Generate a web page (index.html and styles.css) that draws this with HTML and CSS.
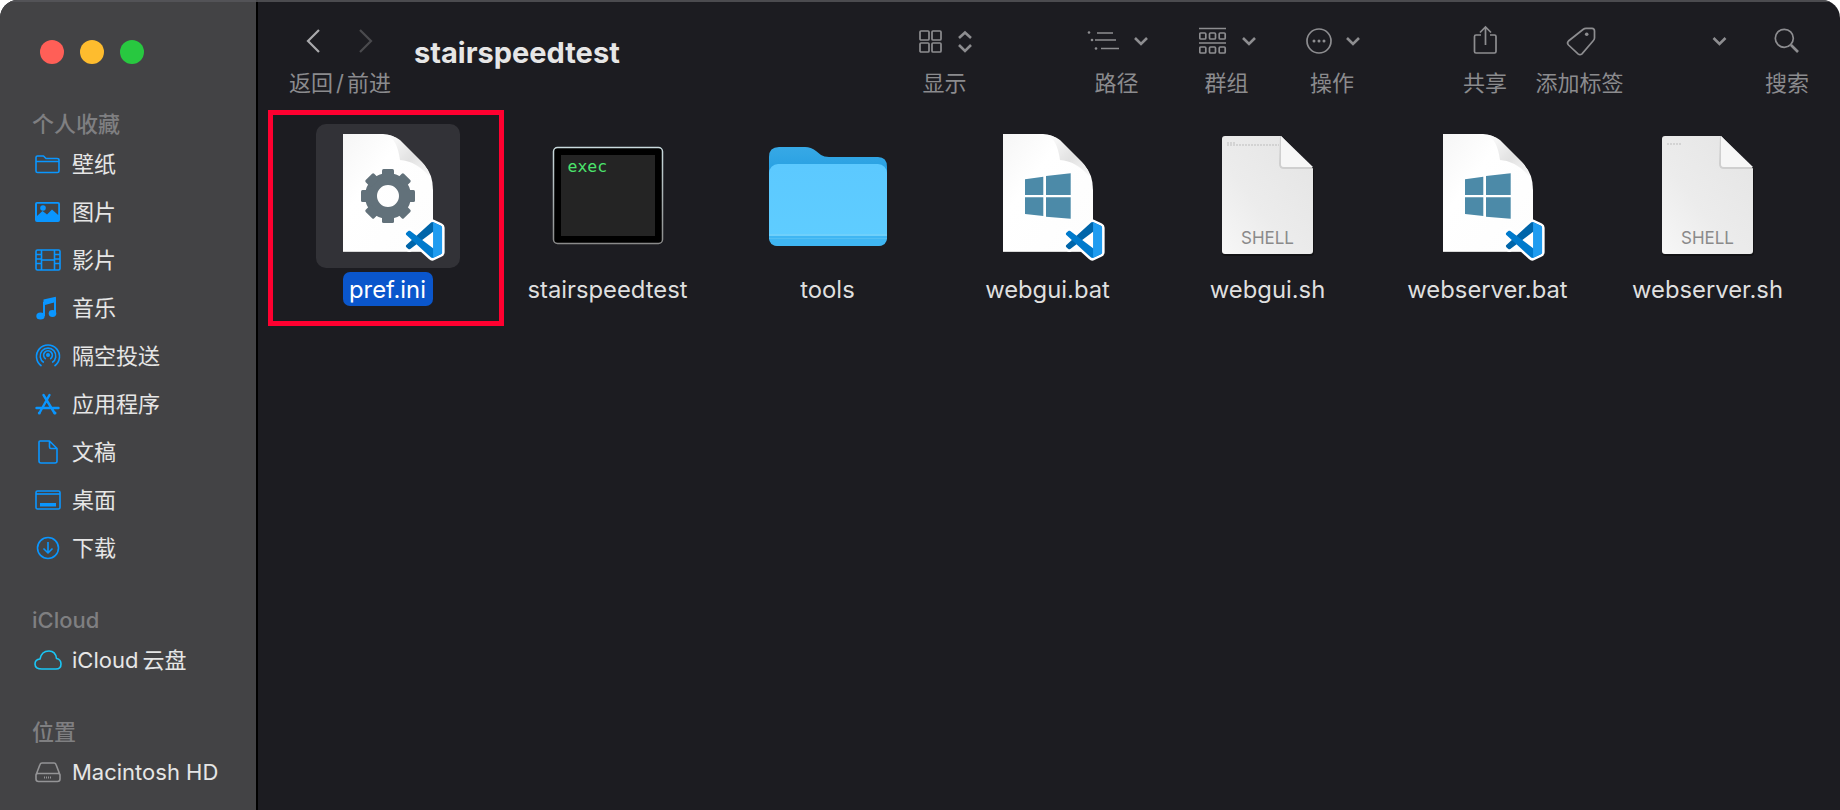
FILE: index.html
```html
<!DOCTYPE html>
<html lang="zh-CN">
<head>
<meta charset="utf-8">
<title>stairspeedtest</title>
<link rel="stylesheet" href="styles.css">
</head>
<body>
<svg class="defs" aria-hidden="true">
  <defs>
    <linearGradient id="pageGrad" x1="0" y1="0" x2="1" y2="1"><stop offset="0" stop-color="#f6f6f6"/><stop offset=".35" stop-color="#ffffff"/><stop offset="1" stop-color="#fdfdfd"/></linearGradient>
    <linearGradient id="foldShadow" x1="0" y1="0" x2="1" y2="1"><stop offset="0" stop-color="#ffffff"/><stop offset=".55" stop-color="#e2e2e2"/><stop offset="1" stop-color="#f8f8f8"/></linearGradient>
    <linearGradient id="shellGrad" x1="1" y1="0" x2="0" y2="1"><stop offset="0" stop-color="#e4e4e4"/><stop offset=".6" stop-color="#ececec"/><stop offset="1" stop-color="#f7f7f7"/></linearGradient>
    <linearGradient id="execRim" x1="0" y1="0" x2="0" y2="1"><stop offset="0" stop-color="#c9dade"/><stop offset="1" stop-color="#8a8a8a"/></linearGradient>
    <linearGradient id="folderBack" x1="0" y1="0" x2="0" y2="1"><stop offset="0" stop-color="#37a9e6"/><stop offset="1" stop-color="#1f9be0"/></linearGradient>
    <linearGradient id="folderFront" x1="0" y1="0" x2="0" y2="1"><stop offset="0" stop-color="#5cc9ff"/><stop offset="1" stop-color="#5fcdff"/></linearGradient>
    <symbol id="vsc" viewBox="-8 -8 116 116">
      <path fill="#fff" stroke="#fff" stroke-width="14" stroke-linejoin="round" d="M75.9 99.1 96.5 89.2C98.6 88.2 100 86 100 83.6V16.4C100 14 98.6 11.8 96.5 10.8L75.9.9C73.5-.3 70.6.2 68.8 2.1L29.4 38 12.2 25C10.6 23.8 8.4 23.9 6.9 25.2L1.4 30.3C-.5 31.9-.5 34.8 1.4 36.4L16.2 50 1.4 63.6C-.5 65.2-.5 68.1 1.4 69.7L6.9 74.8C8.4 76.1 10.6 76.2 12.2 75L29.4 62 68.8 97.9C70.6 99.8 73.5 100.3 75.9 99.1Z"/>
      <path fill="#0065A9" d="M96.4614 10.7962 75.8569.875542C73.4719-.272773 70.6217.211611 68.75 2.08333L1.29858 63.5832C-.515693 65.2373-.513607 68.0937 1.30308 69.7452L6.81272 74.754C8.29793 76.1042 10.5347 76.2036 12.1338 74.9905L93.3609 13.3699C96.086 11.3026 100 13.2462 100 16.6667V16.4275C100 14.0265 98.6246 11.8378 96.4614 10.7962Z"/>
      <path fill="#007ACC" d="M96.4614 89.2038 75.8569 99.1245C73.4719 100.273 70.6217 99.7884 68.75 97.9167L1.29858 36.4168C-.515693 34.7627-.513607 31.9063 1.30308 30.2548L6.81272 25.246C8.29793 23.8958 10.5347 23.7964 12.1338 25.0095L93.3609 86.6301C96.086 88.6974 100 86.7538 100 83.3333V83.5725C100 85.9735 98.6246 88.1622 96.4614 89.2038Z"/>
      <path fill="#1F9CF0" d="M75.8578 99.1263C73.4721 100.274 70.6219 99.7885 68.75 97.9166 71.0564 100.223 75 98.5895 75 95.3278V4.67213C75 1.41039 71.0564-.223106 68.75 2.08329 70.6219.211402 73.4721-.273666 75.8578.873633L96.4587 10.7807C98.6234 11.8217 100 14.0112 100 16.4132V83.5871C100 85.9891 98.6234 88.1786 96.4586 89.2196L75.8578 99.1263Z"/>
    </symbol>
    <symbol id="page" viewBox="0 0 144 144">
      <path fill="url(#pageGrad)" d="M27 10H67Q76 10 84 17L108 41Q117 50 117 66V128H27Z"/>
      <path fill="#d8d8d8" d="M27 127H117V128H27Z"/>
      <path fill="url(#foldShadow)" d="M70 11Q81 14 84 36Q100 37 114 53Q112 44 106 38L84 16Q77 11 70 11Z"/>
    </symbol>
    <symbol id="win" viewBox="0 0 144 144">
      <path fill="#4c8aa8" d="M49 55.3 67.3 52.7V71H49ZM70 52 94.7 49.3V71H70ZM49 73.3H67.3V92L49 90ZM70 73.3H94.7V94.7L70 92.7Z"/>
    </symbol>
    <symbol id="shell" viewBox="0 0 144 144">
      <path fill="#000" opacity=".35" d="M29 14H88L118 46V129Q118 132 115 132H29Q26 132 26 129V17Q26 14 29 14Z"/>
      <path fill="url(#shellGrad)" d="M29 12H85L117 45V127Q117 130 114 130H29Q26 130 26 127V15Q26 12 29 12Z"/>
      <path fill="#cfcfcf" d="M84 12 85 12V40Q85 43 88 43H116L117 45H88Q83 45 83 40Z"/>
      <path fill="#f6f6f6" d="M85 12 117 43H88Q85 43 85 40Z"/>
    </symbol>
  </defs>
</svg>

<div class="window">
  <aside class="sidebar">
    <div class="lights"><span class="light light-red"></span><span class="light light-amber"></span><span class="light light-green"></span></div>

    <h2 class="side-head side-head-first">个人收藏</h2>
    <ul class="side-list">
      <li class="side-item"><svg class="side-icon" viewBox="0 0 28 28"><path class="ico-s" d="M2 21V7.5Q2 6 3.5 6H9.5L12 8.5H23Q25 8.500 25 10V21Q25 22.500 23.500 22.500H3.500Q2 22.500 2 21ZM2 11.500H25"/></svg><span class="cjk">壁纸</span></li>
      <li class="side-item"><svg class="side-icon" viewBox="0 0 28 28"><path class="ico-f" fill-rule="evenodd" d="M3 4H24Q26 4 26 6V22Q26 24 24 24H3Q1 24 1 22V6Q1 4 3 4ZM3 5.800V18L8.500 13 13 16.500 18 11.500 24.200 17V6.200Q24.200 5.800 23.800 5.800Z"/><circle class="ico-f" cx="9" cy="10" r="2.800"/></svg><span class="cjk">图片</span></li>
      <li class="side-item"><svg class="side-icon" viewBox="0 0 28 28"><rect class="ico-s" x="2" y="4" width="24" height="20" rx="1.500"/><path class="ico-s" d="M7.500 4V24M20.500 4V24M7.500 14H20.500M2 8.500H7.500M2 13H7.500M2 17.500H7.500M20.500 8.500H26M20.500 13H26M20.500 17.500H26"/></svg><span class="cjk">影片</span></li>
      <li class="side-item"><svg class="side-icon" viewBox="0 0 28 28"><path class="ico-f" d="M9 8 22 3.500Q21.500 3 22 3V19H20V8.500L11 11V22H9Z"/><path class="ico-f" d="M9.500 5.500 21.800 2.800 22 7.500 9.500 10.500Z"/><ellipse class="ico-f" cx="6.500" cy="22" rx="4.200" ry="3.600"/><ellipse class="ico-f" cx="18.500" cy="19.500" rx="3.800" ry="3.400"/></svg><span class="cjk">音乐</span></li>
      <li class="side-item"><svg class="side-icon" viewBox="0 0 28 28"><circle class="ico-f" cx="14" cy="13" r="2"/><path class="ico-s" d="M7.500 24A11.500 11.500 0 1 1 20.500 24M9.800 20.500A7.800 7.800 0 1 1 18.200 20.500M11.800 17A4.400 4.400 0 1 1 16.200 17"/></svg><span class="cjk">隔空投送</span></li>
      <li class="side-item"><svg class="side-icon" viewBox="0 0 28 28"><path class="ico-t" d="M9.500 5 20.500 23M15.500 5 6 22M2.500 18H24.500"/><circle class="ico-f" cx="5.300" cy="23" r="1.500"/><circle class="ico-f" cx="21" cy="23" r="1.500"/></svg><span class="cjk">应用程序</span></li>
      <li class="side-item"><svg class="side-icon" viewBox="0 0 28 28"><path class="ico-s" d="M6 3H15.500L23 10.500V23Q23 25 21 25H7Q5 25 5 23V4Q5 3 6 3ZM15.500 3V9Q15.500 10.500 17 10.500H23"/></svg><span class="cjk">文稿</span></li>
      <li class="side-item"><svg class="side-icon" viewBox="0 0 28 28"><rect class="ico-s" x="2" y="5" width="24" height="18" rx="1.500"/><path class="ico-s" d="M2 8H26"/><rect class="ico-f" x="6" y="17" width="16" height="3.500"/></svg><span class="cjk">桌面</span></li>
      <li class="side-item"><svg class="side-icon" viewBox="0 0 28 28"><circle class="ico-s" cx="14" cy="14" r="10.500"/><path class="ico-s" d="M14 8V19M9.500 14.500 14 19 18.500 14.500"/></svg><span class="cjk">下载</span></li>
    </ul>

    <h2 class="side-head">iCloud</h2>
    <ul class="side-list">
      <li class="side-item"><svg class="side-icon side-icon-wide" viewBox="0 0 28 28"><path class="ico-cloud" d="M8 23Q1 23 1 18Q1 13.500 6 13Q7.500 5 15 5Q21.500 5 22.500 12.500Q27 13.500 27 18Q27 23 22 23Z"/></svg><span class="cjk">iCloud&#8201;云盘</span></li>
    </ul>

    <h2 class="side-head">位置</h2>
    <ul class="side-list">
      <li class="side-item"><svg class="side-icon" viewBox="0 0 28 28"><path class="ico-hd" d="M2 17 6 6.500Q6.500 5 8 5H20Q21.500 5 22 6.500L26 17V21Q26 23.500 23.500 23.500H4.500Q2 23.500 2 21ZM2 17Q2 15.500 4 15.500H24Q26 15.500 26 17"/><path class="ico-hd-dots" d="M10 19.500H18"/></svg>Macintosh HD</li>
    </ul>
  </aside>

  <main class="main">
    <header class="toolbar">
      <div class="tool tool-nav">
        <div class="tool-icon tool-icon-nav">
          <svg class="chev" width="16" height="36" viewBox="0 0 16 36"><path class="tb-back" d="M13 7 2 18 13 29"/></svg>
          <svg class="chev" width="16" height="36" viewBox="0 0 16 36"><path class="tb-fwd" d="M1 7 12 18 1 29"/></svg>
        </div>
        <span class="tool-label tool-label-nav">返回<span class="slash">/</span>前进</span>
      </div>
      <h1 class="title">stairspeedtest</h1>
      <div class="spacer"></div>
      <div class="tool tool-view">
        <div class="tool-icon"><svg width="53" height="36" viewBox="0 0 53 36"><rect class="tb" x="1" y="8" width="9" height="9" rx="1"/><rect class="tb" x="13" y="8" width="9" height="9" rx="1"/><rect class="tb" x="1" y="20" width="9" height="9" rx="1"/><rect class="tb" x="13" y="20" width="9" height="9" rx="1"/><path class="tb-bold" d="M40 15 46 9.500 52 15M40 22 46 28 52 22"/></svg></div>
        <span class="tool-label">显示</span>
      </div>
      <div class="tool tool-path">
        <div class="tool-icon"><svg width="61" height="36" viewBox="0 0 61 36"><path class="tb" d="M10 10H26M8 17H29M14 25.500H32"/><circle class="tb-dot" cx="2" cy="9.500" r="1.300"/><circle class="tb-dot" cx="5" cy="17" r="1.300"/><circle class="tb-dot" cx="9" cy="25.500" r="1.300"/><path class="tb-bold" d="M48 15 54 21 60 15"/></svg></div>
        <span class="tool-label">路径</span>
      </div>
      <div class="tool tool-group">
        <div class="tool-icon"><svg width="57" height="36" viewBox="0 0 57 36"><path class="tb" d="M0 5.500H27M0 20H27"/><rect class="tb" x=".8" y="10" width="6" height="6" rx="1"/><rect class="tb" x="10.500" y="10" width="6" height="6" rx="1"/><rect class="tb" x="20.200" y="10" width="6" height="6" rx="1"/><rect class="tb" x=".8" y="24" width="6" height="6" rx="1"/><rect class="tb" x="10.500" y="24" width="6" height="6" rx="1"/><rect class="tb" x="20.200" y="24" width="6" height="6" rx="1"/><path class="tb-bold" d="M44 15 50 21 56 15"/></svg></div>
        <span class="tool-label">群组</span>
      </div>
      <div class="tool tool-action">
        <div class="tool-icon"><svg width="54" height="36" viewBox="0 0 54 36"><circle class="tb" cx="13" cy="18" r="12"/><circle class="tb-dot" cx="8" cy="18" r="1.500"/><circle class="tb-dot" cx="13" cy="18" r="1.500"/><circle class="tb-dot" cx="18" cy="18" r="1.500"/><path class="tb-bold" d="M41 15 47 21 53 15"/></svg></div>
        <span class="tool-label">操作</span>
      </div>
      <div class="tool tool-share">
        <div class="tool-icon"><svg width="44" height="36" viewBox="0 0 44 36"><path class="tb" d="M17 12H12Q10.500 12 10.500 13.500V28.500Q10.500 30 12 30H30.500Q32 30 32 28.500V13.500Q32 12 30.500 12H26M21.500 22V4.500M16 9.500 21.500 4 27 9.500"/></svg></div>
        <span class="tool-label">共享</span>
      </div>
      <div class="tool tool-tag">
        <div class="tool-icon"><svg width="30" height="36" viewBox="0 0 30 36"><path class="tb" d="M20 5.300H26Q28.500 5.300 28.500 8V15Q28.500 16.500 27 18L16 30.800Q14 32.500 12 30.800L2.500 22Q.5 20 2.500 18L17 6.500Q18.500 5.300 20 5.300Z"/><circle class="tb-dot" cx="20.700" cy="11.300" r="1.800"/></svg></div>
        <span class="tool-label">添加标签</span>
      </div>
      <div class="tool tool-more">
        <div class="tool-icon"><svg width="15" height="36" viewBox="0 0 15 36"><path class="tb-bold" d="M1.500 15 7.500 21 13.500 15"/></svg></div>
      </div>
      <div class="tool tool-search">
        <div class="tool-icon"><svg width="44" height="36" viewBox="0 0 44 36"><circle class="tb" cx="18.300" cy="15.300" r="9"/><path class="tb-bold" d="M25 22 32 29"/></svg></div>
        <span class="tool-label">搜索</span>
      </div>
    </header>

    <section class="files">
      <figure class="file">
        <div class="thumb thumb-selected"><svg width="144" height="144" viewBox="0 0 144 144">
          <use href="#page"/>
          <g fill="#62717a" transform="translate(72 72)">
            <circle r="17" fill="none" stroke="#62717a" stroke-width="12"/>
            <rect x="-6" y="-27" width="12" height="9" rx="1.500"/>
            <rect x="-6" y="-27" width="12" height="9" rx="1.500" transform="rotate(45)"/>
            <rect x="-6" y="-27" width="12" height="9" rx="1.500" transform="rotate(90)"/>
            <rect x="-6" y="-27" width="12" height="9" rx="1.500" transform="rotate(135)"/>
            <rect x="-6" y="-27" width="12" height="9" rx="1.500" transform="rotate(180)"/>
            <rect x="-6" y="-27" width="12" height="9" rx="1.500" transform="rotate(225)"/>
            <rect x="-6" y="-27" width="12" height="9" rx="1.500" transform="rotate(270)"/>
            <rect x="-6" y="-27" width="12" height="9" rx="1.500" transform="rotate(315)"/>
          </g>
          <use href="#vsc" x="87" y="95" width="42" height="42"/>
        </svg></div>
        <figcaption class="name name-selected">pref.ini</figcaption>
      </figure>

      <figure class="file">
        <div class="thumb"><svg width="144" height="144" viewBox="0 0 144 144">
          <rect x="17.500" y="23.500" width="109" height="96" rx="4" fill="#000" stroke="url(#execRim)" stroke-width="1.500"/>
          <rect x="25" y="31" width="94" height="81" fill="#242424"/>
          <text class="exec" x="31.500" y="48">exec</text>
        </svg></div>
        <figcaption class="name">stairspeedtest</figcaption>
      </figure>

      <figure class="file">
        <div class="thumb"><svg width="144" height="144" viewBox="0 0 144 144">
          <path fill="url(#folderBack)" d="M13 33Q13 23 23 23H49Q55 23 60 27L65 31Q68 33 73 33H122Q131 33 131 43V60H13Z"/>
          <rect x="13" y="40" width="118" height="82" rx="9" fill="url(#folderFront)"/>
          <path fill="#3fb6f3" d="M13 111H131V113Q131 122 122 122H22Q13 122 13 113Z"/>
          <rect x="13" y="110" width="118" height="2" fill="#6fd0fb"/>
          <rect x="13" y="114" width="118" height="1" fill="#52bff3"/>
        </svg></div>
        <figcaption class="name">tools</figcaption>
      </figure>

      <figure class="file">
        <div class="thumb"><svg width="144" height="144" viewBox="0 0 144 144">
          <use href="#page"/><use href="#win"/><use href="#vsc" x="87" y="95" width="42" height="42"/>
        </svg></div>
        <figcaption class="name">webgui.bat</figcaption>
      </figure>

      <figure class="file">
        <div class="thumb"><svg width="144" height="144" viewBox="0 0 144 144">
          <use href="#shell"/>
          <path class="tiny" d="M31 19H39M31 21H83"/>
          <text class="shell" x="71.500" y="120">SHELL</text>
        </svg></div>
        <figcaption class="name">webgui.sh</figcaption>
      </figure>

      <figure class="file">
        <div class="thumb"><svg width="144" height="144" viewBox="0 0 144 144">
          <use href="#page"/><use href="#win"/><use href="#vsc" x="87" y="95" width="42" height="42"/>
        </svg></div>
        <figcaption class="name">webserver.bat</figcaption>
      </figure>

      <figure class="file">
        <div class="thumb"><svg width="144" height="144" viewBox="0 0 144 144">
          <use href="#shell"/>
          <path class="tiny" d="M31 20H45"/>
          <text class="shell" x="71.500" y="120">SHELL</text>
        </svg></div>
        <figcaption class="name">webserver.sh</figcaption>
      </figure>
    </section>

    <div class="marker"></div>
  </main>
</div>
</body>
</html>
```

FILE: styles.css
```css
* { box-sizing: border-box; }
html, body { margin: 0; height: 100%; background: #fff; }
body { font-family: Inter, "Noto Sans CJK SC", sans-serif; overflow: hidden; }
.defs { position: absolute; width: 0; height: 0; }

.window {
  display: flex;
  height: 810px;
  border-radius: 18px 18px 0 0;
  overflow: hidden;
  background: #1c1c21;
  position: relative;
}
.window::after {
  content: "";
  position: absolute;
  inset: 0 0 auto 0;
  height: 2px;
  background: #58585b;
  opacity: .8;
}

/* sidebar */
.sidebar {
  width: 258px;
  flex: none;
  background: #434345;
  border-right: 2px solid #000;
  padding-top: 40px;
}
.lights { display: flex; gap: 16px; padding-left: 40px; height: 24px; }
.light { width: 24px; height: 24px; border-radius: 50%; }
.light-red { background: #ff5f57; }
.light-amber { background: #febc2e; }
.light-green { background: #28c840; }

.side-head {
  margin: 32px 0 0;
  height: 32px;
  padding-left: 32px;
  font-size: 22px;
  line-height: 32px;
  font-weight: 500;
  color: #7f7f81;
}
.side-head-first { margin-top: 44px; }
.side-list { list-style: none; margin: 0; padding: 0; }
.side-item {
  display: flex;
  align-items: center;
  gap: 10px;
  height: 48px;
  padding-left: 34px;
  font-size: 22px;
  color: #e6e6e6;
  white-space: nowrap;
}
.cjk { margin-bottom: 4px; }
.side-icon { width: 28px; height: 28px; flex: none; }
.ico-s { fill: none; stroke: #0a96ff; stroke-width: 1.6; stroke-linejoin: round; }
.ico-f { fill: #0a96ff; }
.ico-t { fill: none; stroke: #0a96ff; stroke-width: 2.4; stroke-linecap: round; }
.ico-cloud { fill: none; stroke: #1ac6f5; stroke-width: 1.6; stroke-linejoin: round; }
.ico-hd { fill: none; stroke: #949496; stroke-width: 1.6; stroke-linejoin: round; }
.ico-hd-dots { fill: none; stroke: #949496; stroke-width: 2; stroke-dasharray: 1 1; }

/* main */
.main { flex: 1; min-width: 0; position: relative; }
.toolbar {
  display: flex;
  align-items: flex-start;
  height: 110px;
  padding: 23px 30px 0 32px;
}
.tool { display: flex; flex-direction: column; align-items: center; flex: none; }
.tool-icon { display: flex; justify-content: center; height: 36px; }
.tool-icon-nav { gap: 37px; }
.tool-label {
  font-size: 22px;
  line-height: 48px;
  height: 48px;
  padding-right: 2px;
  color: #8b8b8e;
  white-space: nowrap;
}
.tool-label-nav { padding-right: 0; }
.slash { margin: 0 3px; }
.tool-nav { width: 100px; }
.tool-view { width: 53px; }
.tool-path { width: 61px; margin-left: 115px; }
.tool-group { width: 57px; margin-left: 51px; }
.tool-action { width: 54px; margin-left: 50px; }
.tool-share { width: 44px; margin-left: 104px; }
.tool-tag { width: 89px; margin-left: 28px; }
.tool-more { width: 15px; margin-left: 87px; }
.tool-search { width: 44px; margin-left: 39px; }
.spacer { flex: 1; }
.title {
  margin: 0 0 0 24px;
  font-size: 29px;
  line-height: 60px;
  font-weight: 700;
  color: #e6e6e6;
}
.tb { fill: none; stroke: #8d8d90; stroke-width: 1.7; }
.tb-bold { fill: none; stroke: #8d8d90; stroke-width: 2.6; }
.tb-dot { fill: #8d8d90; }
.tb-back { fill: none; stroke: #a9a9ac; stroke-width: 2.2; }
.tb-fwd { fill: none; stroke: #4a4a4e; stroke-width: 2.2; }
.chev { display: block; }

/* file grid */
.files { display: flex; padding: 14px 0 0 20px; }
.file {
  width: 220px;
  margin: 0;
  display: flex;
  flex-direction: column;
  align-items: center;
}
.thumb { width: 144px; height: 144px; border-radius: 10px; }
.thumb svg { display: block; }
.thumb-selected { background: #323237; }
.name {
  margin-top: 4px;
  height: 34px;
  padding: 0 7px 0 6px;
  border-radius: 7px;
  font-size: 23.8px;
  line-height: 35px;
  color: #dfdfdf;
  white-space: nowrap;
}
.name-selected { background: #0a56cc; color: #fff; }
.exec { font-family: "DejaVu Sans Mono", monospace; font-size: 16.5px; fill: #4be36c; }
.shell { font-family: Inter, sans-serif; font-size: 17px; fill: #8a8a8a; text-anchor: middle; }
.tiny { fill: none; stroke: #bdbdbd; stroke-width: 1; stroke-dasharray: 2 1; }

/* overlay annotation */
.marker {
  position: absolute;
  left: 10px;
  top: 110px;
  width: 236px;
  height: 216px;
  border: 5px solid #ff0030;
}
```
